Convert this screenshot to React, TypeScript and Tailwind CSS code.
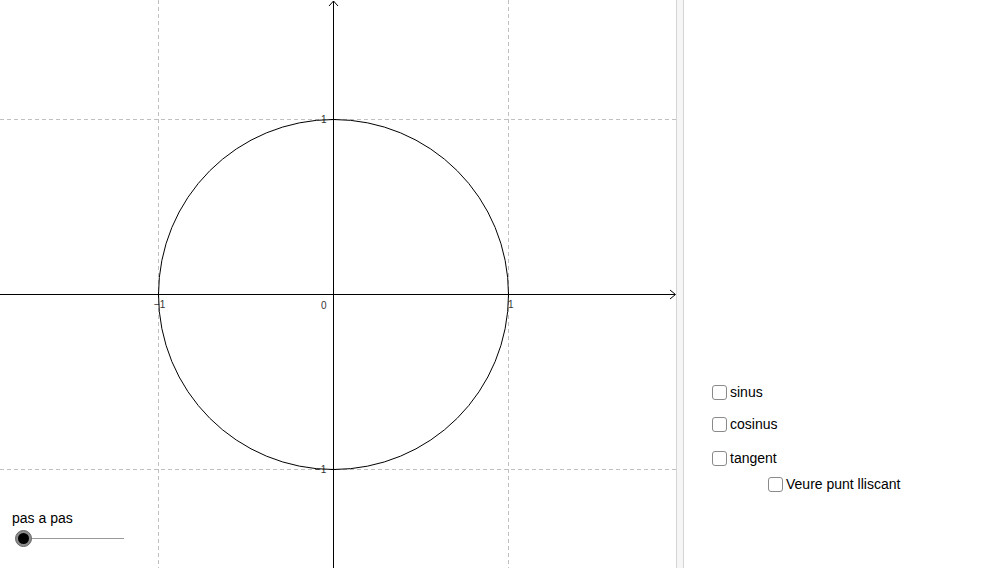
const font = { fontFamily: '"Liberation Sans", Arial, sans-serif' };

function Graph() {
  const ox = 333;
  const oy = 294;
  const u = 175;
  return (
    <svg width={676} height={568} viewBox="0 0 676 568" className="block">
      {/* grid */}
      <g stroke="#c0c0c0" strokeWidth={1} strokeDasharray="4 3">
        <line x1={ox - u + 0.5} y1={0} x2={ox - u + 0.5} y2={568} />
        <line x1={ox + u + 0.5} y1={0} x2={ox + u + 0.5} y2={568} />
        <line x1={0} y1={oy - u + 0.5} x2={676} y2={oy - u + 0.5} />
        <line x1={0} y1={oy + u + 0.5} x2={676} y2={oy + u + 0.5} />
      </g>
      {/* axes */}
      <g stroke="#000" strokeWidth={1}>
        <line x1={0} y1={oy + 0.5} x2={675} y2={oy + 0.5} />
        <line x1={ox + 0.5} y1={1} x2={ox + 0.5} y2={568} />
        <polyline points={`${670},${oy - 4} ${675.5},${oy + 0.5} ${670},${oy + 5}`} fill="none" />
        <polyline points={`${ox - 4},${6} ${ox + 0.5},${1} ${ox + 5},${6}`} fill="none" />
        {/* ticks */}
        <line x1={ox - u + 0.5} y1={oy - 2} x2={ox - u + 0.5} y2={oy + 3} />
        <line x1={ox + u + 0.5} y1={oy - 2} x2={ox + u + 0.5} y2={oy + 3} />
        <line x1={ox - 2} y1={oy - u + 0.5} x2={ox + 3} y2={oy - u + 0.5} />
        <line x1={ox - 2} y1={oy + u + 0.5} x2={ox + 3} y2={oy + u + 0.5} />
      </g>
      <g fontSize={10} fill="#333" style={font}>
        <text x={ox - 12} y={oy + 15}>0</text>
        <text x={ox - u - 4} y={oy + 14}>−1</text>
        <text x={ox + u} y={oy + 14}>1</text>
        <text x={ox - 12} y={oy - u + 4}>1</text>
        <text x={ox - 18} y={oy + u + 4}>−1</text>
      </g>
      <circle cx={ox + 0.5} cy={oy + 0.5} r={u} fill="none" stroke="#000" strokeWidth={1} />
    </svg>
  );
}

function Check({ label }: { label: string }) {
  return (
    <label className="flex items-center h-[16px] gap-[3px] text-[14px] leading-[16px] text-black">
      <span className="w-[15px] h-[15px] rounded-[3px] border border-[#8a8a8a] bg-white" />
      <span>{label}</span>
    </label>
  );
}

export default function App() {
  return (
    <div className="w-[1002px] h-[568px] flex bg-white overflow-hidden" style={font}>
      <div className="relative w-[676px] h-[568px]">
        <Graph />
        <div className="absolute left-[12px] top-[510px] flex flex-col">
          <span className="text-[14px] text-black leading-[16px]">pas a pas</span>
          <div className="relative mt-[4px] w-[112px] h-[17px] flex items-center">
            <div className="absolute left-[11px] right-0 h-px bg-[#999]" />
            <div className="relative ml-[3px] w-[17px] h-[17px] rounded-full bg-[#8c8c8c] border border-[#666] flex items-center justify-center">
              <div className="w-[11px] h-[11px] rounded-full bg-black" />
            </div>
          </div>
        </div>
      </div>
      <div className="w-[8px] h-full border-x border-[#d4d4d4] bg-[#f6f6f6]" />
      <div className="flex-1 pl-[28px] pt-[384px] flex flex-col">
        <Check label="sinus" />
        <div className="mt-[16px]">
          <Check label="cosinus" />
        </div>
        <div className="mt-[18px]">
          <Check label="tangent" />
        </div>
        <div className="mt-[10px] pl-[56px]">
          <Check label="Veure punt lliscant" />
        </div>
      </div>
    </div>
  );
}
